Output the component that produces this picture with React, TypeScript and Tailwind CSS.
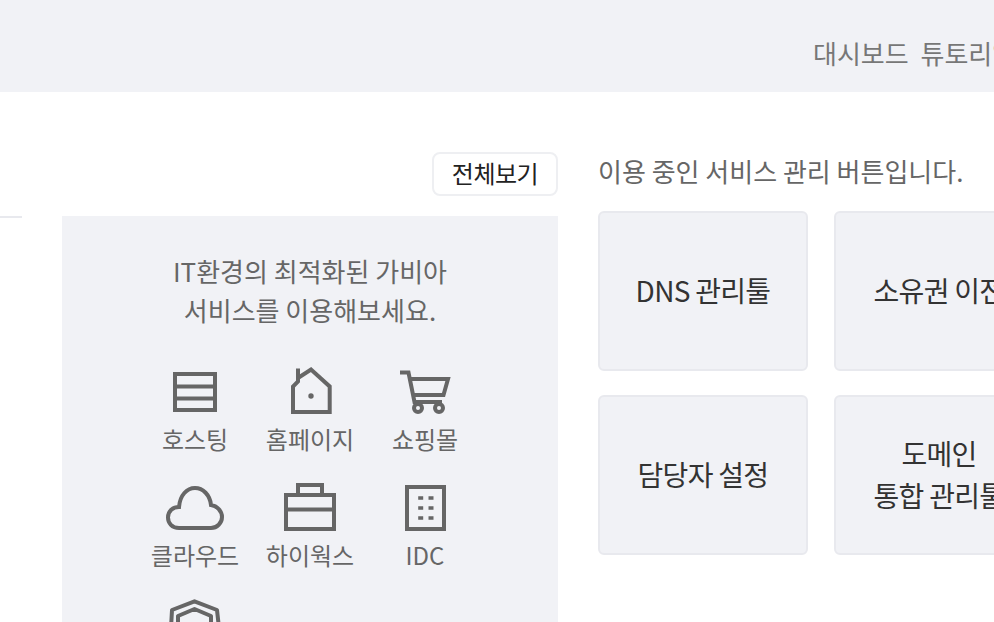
const stroke = { fill: "none", stroke: "#666", strokeWidth: 4 };

const Hosting = () => (
  <svg width="60" height="60" viewBox="0 0 60 60" {...stroke}>
    <rect x="10" y="12" width="40" height="36" />
    <path d="M10 24.5H50M10 36.5H50" />
  </svg>
);

const Home = () => (
  <svg width="60" height="60" viewBox="0 0 60 60" {...stroke}>
    <path d="M13 50V24.5L18 19.5V6.5V16L31 7.5L49.7 24.5V50Z" />
    <circle cx="31" cy="34" r="2.7" fill="#666" stroke="none" />
  </svg>
);

const Cart = () => (
  <svg width="60" height="60" viewBox="0 0 60 60" {...stroke}>
    <path d="M5 10.5H13.5L19.5 40H47M15 17H53L48.5 33H18" />
    <circle cx="23" cy="46" r="4" />
    <circle cx="44" cy="46" r="4" />
  </svg>
);

const Cloud = () => (
  <svg width="60" height="60" viewBox="0 0 60 60" {...stroke}>
    <path d="M14 50C7 50 3 45 3 39.5C3 33 8 29 14 29C15 17 22 10 30 10C38 10 45 17 46 27C52 28 57 33 57 39C57 45 52 50 46 50Z" />
  </svg>
);

const Briefcase = () => (
  <svg width="60" height="60" viewBox="0 0 60 60" {...stroke}>
    <rect x="6" y="17" width="48" height="34" />
    <path d="M6 31.5H54M18 17V7H42V17" />
  </svg>
);

const Building = () => (
  <svg width="60" height="60" viewBox="0 0 60 60" {...stroke}>
    <rect x="12" y="9" width="37" height="42" />
    <path d="M23.2 20H28.2M33.5 20H38.5M23.2 30H28.2M33.5 30H38.5M23.2 40H28.2M33.5 40H38.5" strokeWidth="3.5" />
  </svg>
);

const Shield = () => (
  <svg width="60" height="60" viewBox="0 0 60 60" {...stroke}>
    <path d="M29.5 7.3L52 16L54 34L29.5 54L6 34L7 16Z" strokeLinejoin="round" />
    <path d="M29.5 15L46 22V32L29.5 45L13 32V22Z" strokeLinejoin="round" />
  </svg>
);

const services = [
  { name: "호스팅", icon: <Hosting /> },
  { name: "홈페이지", icon: <Home /> },
  { name: "쇼핑몰", icon: <Cart /> },
  { name: "클라우드", icon: <Cloud /> },
  { name: "하이웍스", icon: <Briefcase /> },
  { name: "IDC", icon: <Building /> },
  { name: "보안", icon: <Shield /> },
];

const Card = ({ children }: { children: React.ReactNode }) => (
  <div className="flex h-[160px] w-[210px] shrink-0 items-center justify-center rounded-md border-2 border-[#e8e9ee] bg-[#f1f2f6] pb-[2px] text-center text-[28px] leading-[42px] tracking-[-0.7px] whitespace-nowrap text-[#333]">
    <div>{children}</div>
  </div>
);

export default function App() {
  return (
    <div className="h-[622px] w-[994px] overflow-hidden bg-white font-['Noto_Sans_CJK_KR',sans-serif]">
      <header className="flex h-[92px] items-center bg-[#f1f2f6] pt-[12px] pl-[813px] text-[26px] [word-spacing:6px] whitespace-nowrap text-[#777]">
        대시보드 튜토리얼
      </header>
      <main className="flex">
        <div className="w-[22px] shrink-0 pt-[124px]">
          <div className="h-[2px] bg-[#e8e9ee]" />
        </div>
        <section className="ml-[40px] w-[496px] shrink-0 pt-[60px]">
          <div className="flex justify-end">
            <button className="flex h-[44px] w-[126px] items-center justify-center rounded-lg border-2 border-[#eeeff2] bg-white pb-[2px] text-[24px] tracking-[-0.5px] text-[#222]">
              전체보기
            </button>
          </div>
          <div className="mt-[20px] h-[500px] bg-[#f1f2f6] pt-[35px] text-[#666]">
            <p className="text-center text-[26px] leading-[39px]">
              IT환경의 최적화된 가비아
              <br />
              서비스를 이용해보세요.
            </p>
            <ul className="mt-[33px] grid grid-cols-[115px_115px_115px] justify-center">
              {services.map((s) => (
                <li key={s.name} className="flex h-[116px] flex-col items-center">
                  {s.icon}
                  <span className="-mt-[1px] text-[24px] leading-[36px] whitespace-nowrap">{s.name}</span>
                </li>
              ))}
            </ul>
          </div>
        </section>
        <section className="ml-[40px] shrink-0 pt-[59px]">
          <p className="text-[26px] leading-[40px] whitespace-nowrap text-[#666]">이용 중인 서비스 관리 버튼입니다.</p>
          <div className="mt-[20px] grid grid-cols-[210px_210px] gap-x-[26px] gap-y-[24px]">
            <Card>DNS 관리툴</Card>
            <Card>소유권 이전</Card>
            <Card>담당자 설정</Card>
            <Card>
              도메인
              <br />
              통합 관리툴
            </Card>
          </div>
        </section>
      </main>
    </div>
  );
}
